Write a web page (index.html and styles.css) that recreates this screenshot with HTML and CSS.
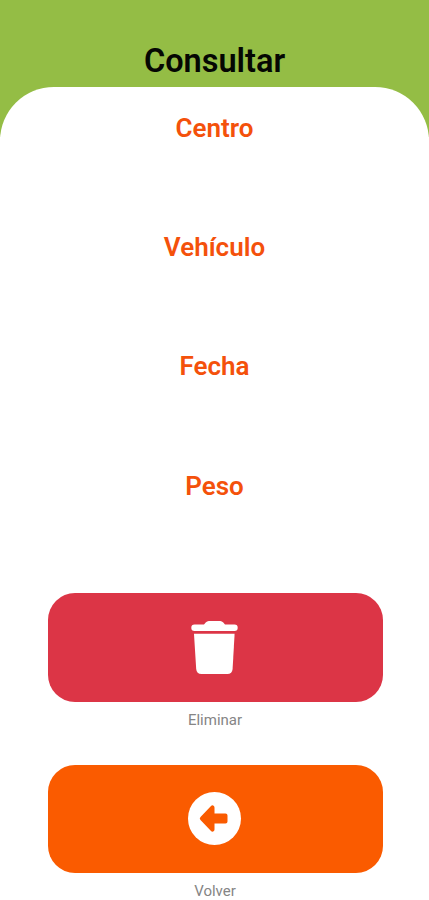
FILE: index.html
```html
<!DOCTYPE html>
<html lang="es">
<head>
    <meta charset="UTF-8">
    <meta name="viewport" content="width=device-width, initial-scale=1.0">
    <title>Consultar</title>
    <link rel="stylesheet" href="styles.css">
</head>
<body>
    <h1>Consultar</h1>
    <main class="panel">
        <h2>Centro</h2>
        <h2>Vehículo</h2>
        <h2>Fecha</h2>
        <h2>Peso</h2>
        <div class="action">
            <button class="delete" aria-label="Eliminar">
                <svg width="48" height="54" viewBox="0 0 48 54" fill="#fff">
                    <path d="M3.500 3.500H13l1.700-2Q16 0 17.800 0h11.400Q31 0 32.300 1.500l1.700 2h9.500q3.200 0 3.200 3.200t-3.200 3.200h-40Q.3 9.900.3 6.700t3.200-3.200z"/>
                    <path d="M3 12.700h40.600l-2 35.300q-.4 5-5.300 5H10.500q-4.900 0-5.300-5z"/>
                </svg>
            </button>
            <span>Eliminar</span>
        </div>
        <div class="action">
            <button class="back" aria-label="Volver">
                <svg width="54" height="54" viewBox="0 0 54 54">
                    <circle cx="26.500" cy="26.500" r="26.500" fill="#fff"/>
                    <path d="M12.500 25 23 14Q24 13 25.200 13.500T26.500 15.500V21.500H37.500q2 0 2 2v6q0 2-2 2H26.500v6q0 1.500-1.300 2t-2.200-.5L12.500 28q-1.500-1.500 0-3z" fill="#fa5b00"/>
                </svg>
            </button>
            <span>Volver</span>
        </div>
    </main>
</body>
</html>
```

FILE: styles.css
```css
body {
    margin: 0;
    height: 900px;
    overflow: hidden;
    font-family: Roboto, sans-serif;
    text-align: center;
    background: linear-gradient(#94bd45 137px, #fff 137px);
}

h1 {
    margin: 0;
    padding-top: 41px;
    height: 46px;
    font-size: 32.500px;
    line-height: 40px;
    font-weight: 600;
    color: #050703;
}

.panel {
    box-sizing: border-box;
    height: 813px;
    padding-top: 26px;
    background: #fff;
    border-radius: 54px 54px 0 0;
}

h2 {
    margin: 0 0 89.200px;
    font-size: 26px;
    line-height: 30px;
    font-weight: 600;
    color: #f4510b;
}

.action {
    display: flex;
    flex-direction: column;
    align-items: center;
    height: 171.500px;
    padding-left: 1px;
}

.action:first-of-type {
    margin-top: 92.700px;
}

.action button {
    display: flex;
    flex-shrink: 0;
    align-items: center;
    justify-content: center;
    width: 335px;
    height: 108.500px;
    padding: 0;
    border: none;
    border-radius: 27px;
    cursor: pointer;
}

.delete {
    background: #dc3546;
}

.back {
    background: #fa5b00;
}

.action span {
    margin-top: 8px;
    font-size: 15px;
    line-height: 20px;
    color: #858585;
}
```
